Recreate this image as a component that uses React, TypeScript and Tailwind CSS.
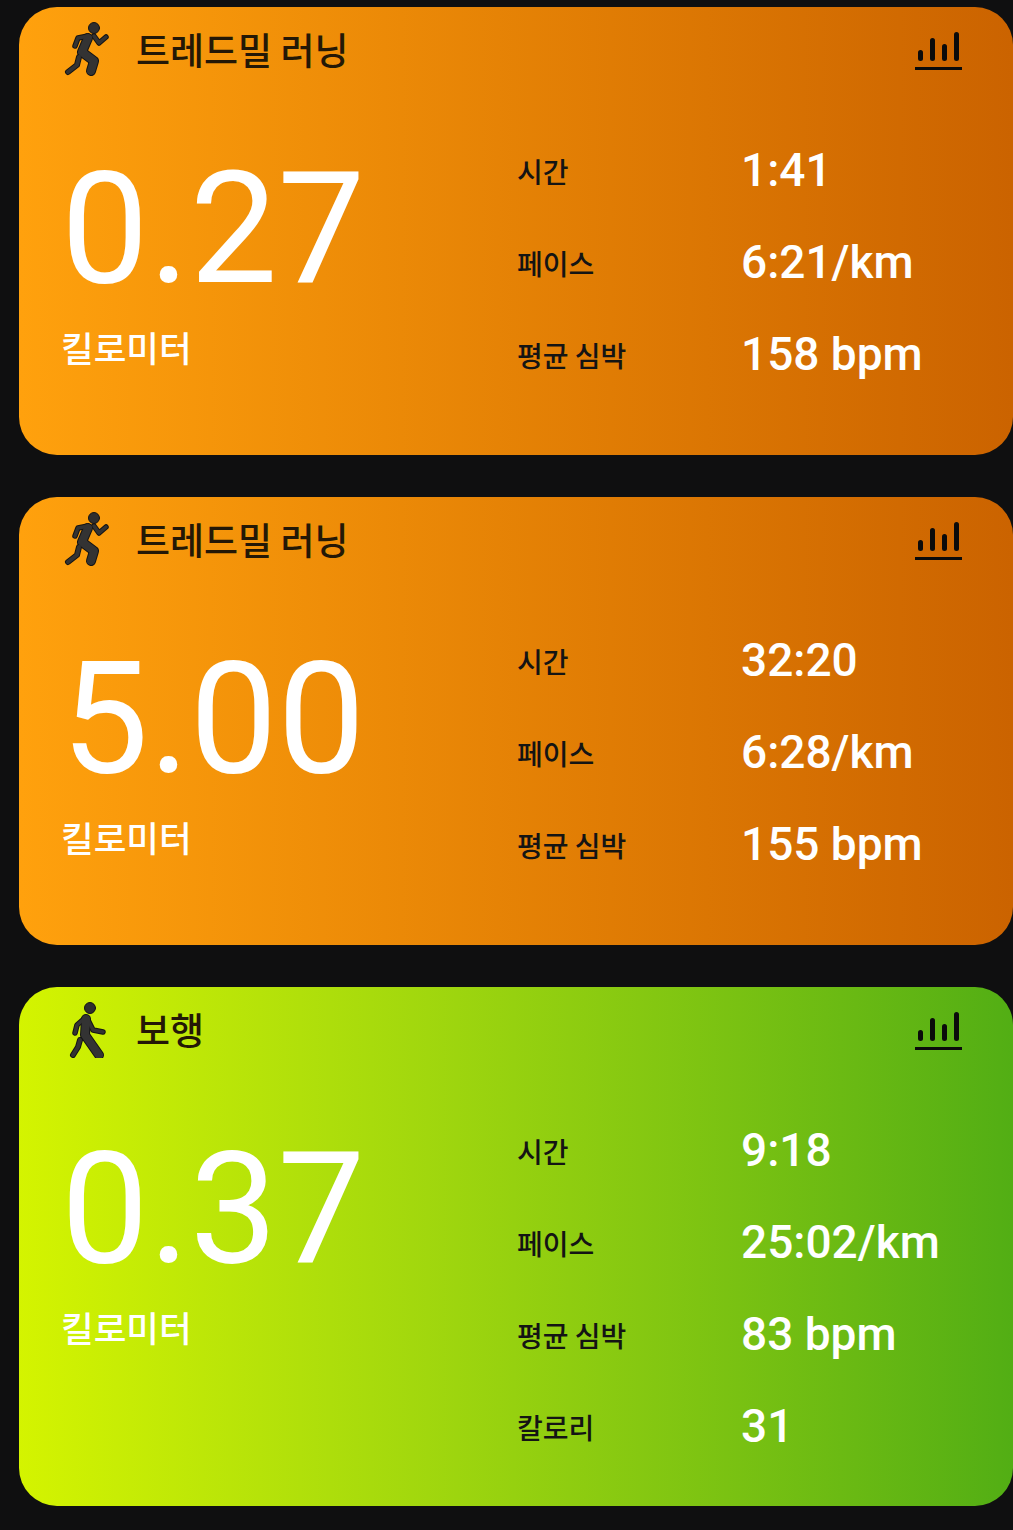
const cjk = "font-['Noto_Sans_CJK_KR','Noto_Sans',sans-serif]";

function Figure({ head, arms, body, leg }: { head: [number, number]; arms: string; body: string; leg: string }) {
    return (
        <svg viewBox="0 0 48 56" className="w-[48px] h-[56px]" fill="none" strokeLinecap="round" strokeLinejoin="round">
            <circle cx={head[0]} cy={head[1]} r="5.5" fill="#2e2e2e" stroke="#141414" strokeWidth="1" />
            <path d={arms} stroke="#141414" strokeWidth="5.5" />
            <path d={body} stroke="#141414" strokeWidth="10" />
            <path d={leg} stroke="#141414" strokeWidth="6" />
            <path d={arms} stroke="#333333" strokeWidth="3.5" />
            <path d={body} stroke="#333333" strokeWidth="8" />
            <path d={leg} stroke="#333333" strokeWidth="4" />
        </svg>
    );
}

function Bars() {
    return (
        <svg viewBox="0 0 47 40" className="w-[47px] h-[40px] mt-[4px]" fill="#0b0b0b">
            <rect x="3" y="18" width="5" height="11" rx="2.5" />
            <rect x="15" y="6" width="5" height="23" rx="2.5" />
            <rect x="27" y="12" width="5" height="17" rx="2.5" />
            <rect x="39" y="0" width="5" height="29" rx="2.5" />
            <rect x="0" y="35" width="47" height="3" />
        </svg>
    );
}

function Card({ kind, title, dist, rows, className }: { kind: "run" | "walk"; title: string; dist: string; rows: [string, string][]; className: string }) {
    return (
        <div className={`ml-[19px] w-[994px] rounded-[38px] pl-[45px] pr-[51px] ${className}`}>
            <div className="flex items-center justify-between h-[86px]">
                <div className="flex items-center">
                    {kind === "run" ? (
                        <Figure head={[30, 6]} arms="M11 24 L14 16 L24 14 M30 14 L35 21 L42 15" body="M24 16 L18 30 L30 39 L27 49" leg="M15 35 L13 43 L4 50" />
                    ) : (
                        <Figure head={[26, 6]} arms="M11 31 L13 23 L21 16 M24 18 L29 28 L39 30" body="M22 17 L21 33 L35 53" leg="M16 38 L14 45 L9 53" />
                    )}
                    <span className={`${cjk} ml-[24px] text-[37px] leading-[50px] text-[#241806] font-medium -mt-[2px]`}>{title}</span>
                </div>
                <Bars />
            </div>
            <div className="flex">
                <div className="w-[484px] pt-[34px]">
                    <div className="text-[156px] leading-[150px] text-white font-['Roboto',sans-serif] mt-[27px] -ml-[3px]">{dist}</div>
                    <div className={`${cjk} -ml-[3px] mt-[19px] text-[35.5px] leading-[48px] text-white font-medium`}>킬로미터</div>
                </div>
                <div className="flex flex-col pt-[31px]">
                    {rows.map(([k, v]) => (
                        <div key={k} className="flex items-center h-[92px] w-[445px]">
                            <span className={`${cjk} w-[224px] mt-[2px] text-[28px] text-[#141414] font-medium`}>{k}</span>
                            <span className="text-[46px] font-medium text-white font-['Roboto',sans-serif]">{v}</span>
                        </div>
                    ))}
                </div>
            </div>
        </div>
    );
}

export default function App() {
    return (
        <div className="w-[1013px] h-[1530px] bg-[#0f0f10] pt-[7px] flex flex-col gap-[42px] overflow-hidden">
            <Card kind="run" title="트레드밀 러닝" dist="0.27" className="h-[448px] bg-gradient-to-r from-[#ffa10d] to-[#cb6300]"
                rows={[["시간", "1:41"], ["페이스", "6:21/km"], ["평균 심박", "158 bpm"]]} />
            <Card kind="run" title="트레드밀 러닝" dist="5.00" className="h-[448px] bg-gradient-to-r from-[#ffa10d] to-[#cb6300]"
                rows={[["시간", "32:20"], ["페이스", "6:28/km"], ["평균 심박", "155 bpm"]]} />
            <Card kind="walk" title="보행" dist="0.37" className="h-[519px] bg-gradient-to-r from-[#d4f400] to-[#52ae14]"
                rows={[["시간", "9:18"], ["페이스", "25:02/km"], ["평균 심박", "83 bpm"], ["칼로리", "31"]]} />
        </div>
    );
}
